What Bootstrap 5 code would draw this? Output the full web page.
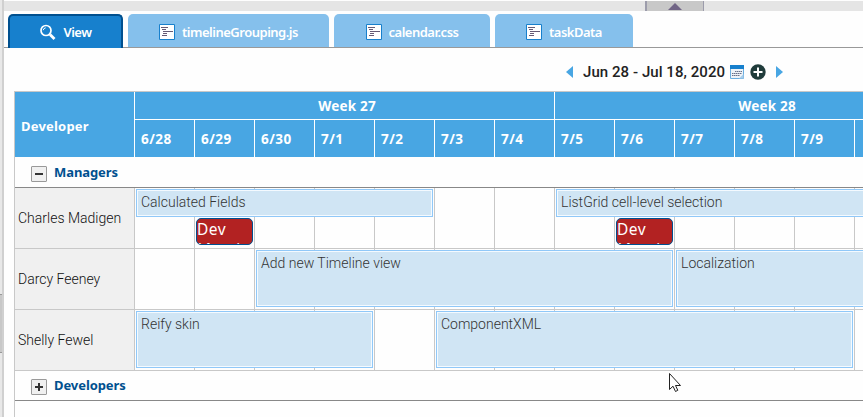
<!DOCTYPE html>
<html lang="en">
<head>
<meta charset="utf-8">
<title>Timeline grouping</title>
<link rel="stylesheet" href="https://cdn.jsdelivr.net/npm/bootstrap@5.3.0/dist/css/bootstrap.min.css">
<style>
body{width:863px;height:417px;overflow:hidden;background:#fefefe;font-family:Roboto,sans-serif;font-size:14px;color:#333;letter-spacing:0}
.tabs .nav-link,.head,.group-row{font-family:"Noto Sans","Open Sans",sans-serif;font-weight:700;font-size:13px;letter-spacing:0}
.gutter{width:4px;background:linear-gradient(90deg,#e8e8e8 2px,#d0d0d0 2px)}
.gutter-handle{width:2px;height:59px;margin-top:294px;background:#c8c8c8;border-top:1px solid #999;border-bottom:1px solid #999}
.main{min-width:0}
.strip{height:10px;margin-top:1px;background:#e5e5e5;padding-left:641px}
.strip-handle{width:59px;height:10px;background:#c8c8c8;border-left:2px solid #9c9cab;border-right:1px solid #9c9cab}
.tabs{height:37px;padding:3px 0 0 4px;gap:5px;border-bottom:1px solid #999;flex-wrap:nowrap}
.tabs .nav-link{height:33px;padding:3px 0 0;border-radius:5px 5px 0 0;background:#85c0ec;color:#fff;line-height:20px;font-weight:600;font-size:13px;letter-spacing:-.5px}
.tabs .nav-link:hover{color:#fff}
.tabs .nav-link span{margin-left:3px}
.tabs .nav-link.active{height:34px;background:#1780cd;border:2px solid #00508f;border-bottom:0;padding-top:0}
.range{height:43px;padding:5px 0 0 562px;font-size:15px;font-weight:500;color:#222;letter-spacing:.06px}
.range-text{width:142px;margin-left:10px}
.cal{margin-left:5px}
.plus{margin-left:6px}
.next{margin-left:10px}
.timeline{margin-left:10px;width:860px;height:326px;border-left:1px solid #c8c8c8;border-top:1px solid #c8c8c8}
.head{height:65px;background:#48a6e3;color:#fff}
.name-head{width:119px;padding:4px 0 0 6px;letter-spacing:.2px}
.weeks,.days{display:grid;grid-template-columns:repeat(14,60px);font-size:13.5px;letter-spacing:.2px}
.weeks{height:28px;border-bottom:1px solid #fff}
.weeks>div{grid-column:span 7;border-left:1px solid #fff;text-align:center;line-height:28px;padding-left:5px}
.days>div{height:37px;border-left:1px solid #fff;padding:0 0 0 6px;line-height:38px;letter-spacing:.5px}
.group-row{height:31px;border-bottom:1px solid #888;color:#00508f;padding:1px 0 0 16px;letter-spacing:-.08px}
.group-row.closed{height:30px;padding-top:0}
.toggle-box{width:16px;height:16px;border:1px solid #999;border-radius:1px;background:#f0f0f0;margin:3px 7px 0 0}
.resource{height:61px;border-bottom:1px solid #c8c8c8}
.resource-name{width:120px;background:#f0f0f0;border-right:1px solid #c8c8c8;padding-left:3px;font-weight:300;color:#111;flex:none}
.lane{display:grid;grid-template-columns:repeat(13,60px);grid-template-rows:28px 28px;row-gap:1px;padding-top:1px;background:repeating-linear-gradient(90deg,transparent 0 59px,#c8c8c8 59px 60px)}
.event{margin:0 2px 0 1px;border:1px solid #90c8f8;box-shadow:inset 0 0 0 1px #f4faff;background:#d0e5f4;padding:3px 4px 0;line-height:19px;color:#333;font-weight:300;overflow:hidden;white-space:nowrap}
.tall{grid-row:1/3}
.meeting{height:27px;margin:0 2px 0 1px;border:1px solid #00508f;border-radius:5px;background:#b22222;color:#fff;font:400 15.5px/20px "Noto Sans","Open Sans",sans-serif;overflow:hidden;padding-top:0;letter-spacing:.5px}
.pointer{position:absolute;left:668px;top:372px}
</style>
<script src="https://cdn.jsdelivr.net/npm/bootstrap@5.3.0/dist/js/bootstrap.bundle.min.js"></script>
</head>
<body class="d-flex position-relative">
<svg width="0" height="0" class="position-absolute"><defs>
<symbol id="doc" viewBox="0 0 16 16"><path d="M.5.5h15v15H.5z" fill="#fff" stroke="#1780cd"/><path d="M2 3.5h7M3 5.5h4M4 7.5h10M4 9.5h4M3 11.5h5" stroke="#665a75"/></symbol>
</defs></svg>
<div class="gutter flex-shrink-0"><div class="gutter-handle"></div></div>
<main class="main flex-grow-1 overflow-hidden">
  <div class="strip"><div class="strip-handle d-flex justify-content-center"><svg width="14" height="10"><path d="M0 9 7 2l7 7z" fill="#716586"/></svg></div></div>
  <nav class="nav tabs">
    <a class="nav-link active d-flex justify-content-center align-items-center" style="width:115px"><svg width="17" height="17" class="me-1" fill="none" stroke="#fff"><circle cx="7" cy="6.5" r="5" stroke-width="1.7"/><path d="M4.2 6.2a3 3 0 0 1 2.5-2.4" stroke-width="1"/><path d="m11 10.5 4.5 4.5" stroke-width="2.8"/></svg><span>View</span></a>
    <a class="nav-link d-flex justify-content-center align-items-center" style="width:201px"><svg width="16" height="16" class="me-1"><use href="#doc"/></svg><span>timelineGrouping.js</span></a>
    <a class="nav-link d-flex justify-content-center align-items-center" style="width:156px"><svg width="16" height="16" class="me-1"><use href="#doc"/></svg><span>calendar.css</span></a>
    <a class="nav-link d-flex justify-content-center align-items-center" style="width:138px"><svg width="16" height="16" class="me-1"><use href="#doc"/></svg><span>taskData</span></a>
  </nav>
  <div class="range d-flex align-items-center text-nowrap">
    <svg width="7" height="12" class="flex-shrink-0"><path d="M7 0v12L0 6z" fill="#48a6e3"/></svg>
    <span class="range-text">Jun 28 - Jul 18, 2020</span>
    <svg width="14" height="14" class="cal flex-shrink-0"><path d="M.5.5h13v13H.5z" fill="#eef3f8" stroke="#6baee0"/><path d="M0 0h14v4H0z" fill="#1780cd"/><path d="M5 6.5h7M2 8.5h10M2 10.5h8" stroke="#69708a" stroke-dasharray="1.5 .5"/><path d="M9 13.5 13.5 9v4.5z" fill="#a9cdea"/></svg>
    <svg width="16" height="16" class="plus flex-shrink-0"><circle cx="8" cy="8" r="7.7" fill="#203c3b"/><path d="M8 3.5v9M3.5 8h9" stroke="#fff" stroke-width="2"/></svg>
    <svg width="7" height="12" class="next flex-shrink-0"><path d="M0 0v12l7-6z" fill="#48a6e3"/></svg>
  </div>
  <section class="timeline">
    <div class="head d-flex">
      <div class="name-head flex-shrink-0 d-flex align-items-center">Developer</div>
      <div>
        <div class="weeks"><div>Week 27</div><div>Week 28</div></div>
        <div class="days"><div>6/28</div><div>6/29</div><div>6/30</div><div>7/1</div><div>7/2</div><div>7/3</div><div>7/4</div><div>7/5</div><div>7/6</div><div>7/7</div><div>7/8</div><div>7/9</div><div></div></div>
      </div>
    </div>
    <div class="group-row d-flex align-items-center"><svg class="toggle-box" viewBox="0 0 14 14"><path d="M3 7h8" stroke="#333" stroke-width="2"/></svg>Managers</div>
    <div class="resource d-flex"><div class="resource-name d-flex align-items-center">Charles Madigen</div>
      <div class="lane"><div class="event" style="grid-area:1/1/2/6">Calculated Fields</div><div class="event" style="grid-area:1/8/2/14">ListGrid cell-level selection</div><div class="meeting" style="grid-area:2/2/3/3">Dev Meeting</div><div class="meeting" style="grid-area:2/9/3/10">Dev Meeting</div></div></div>
    <div class="resource d-flex"><div class="resource-name d-flex align-items-center">Darcy Feeney</div>
      <div class="lane"><div class="event tall" style="grid-column:3/10">Add new Timeline view</div><div class="event tall" style="grid-column:10/14">Localization</div></div></div>
    <div class="resource d-flex"><div class="resource-name d-flex align-items-center">Shelly Fewel</div>
      <div class="lane"><div class="event tall" style="grid-column:1/5">Reify skin</div><div class="event tall" style="grid-column:6/13">ComponentXML</div></div></div>
    <div class="group-row closed d-flex align-items-center"><svg class="toggle-box" viewBox="0 0 14 14"><path d="M3 7h8M7 3v8" stroke="#333" stroke-width="2"/></svg>Developers</div>
  </section>
</main>
<svg class="pointer" width="14" height="22"><path d="M1.5 1.5v16l3.5-3.3 2.5 5.3 2.3-1.2-2.3-4.8h5z" fill="#fff" stroke="#222"/></svg>
</body>
</html>
